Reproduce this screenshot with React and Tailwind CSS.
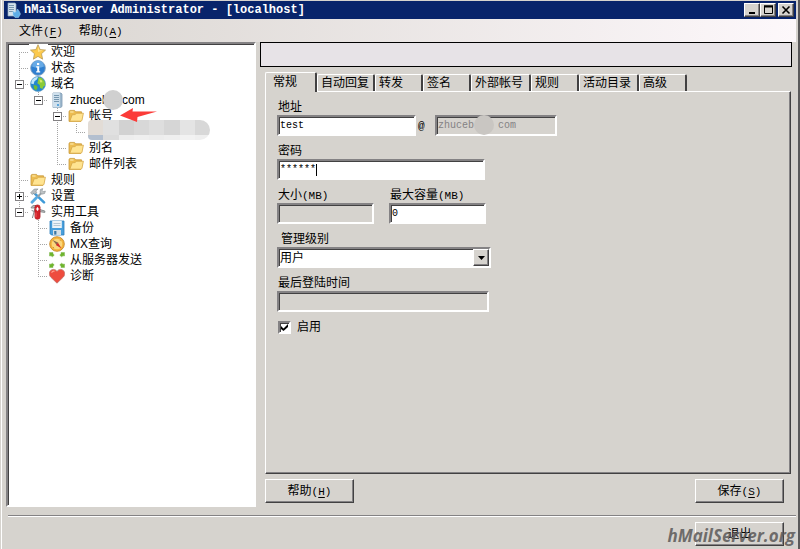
import React from "react";

const SUNKEN =
  "border-2 border-t-[#848284] border-l-[#848284] border-r-white border-b-white shadow-[inset_1px_1px_0_#424142]";
const RAISED =
  "border border-t-white border-l-white border-r-[#424142] border-b-[#424142] shadow-[inset_-1px_-1px_0_#848284]";

function Mono({ children }) {
  return <span className="font-['Liberation_Mono',monospace] text-[11px]">{children}</span>;
}

function Key({ letter }) {
  return (
    <Mono>
      (<u className="underline-offset-2">{letter}</u>)
    </Mono>
  );
}

/* ---------- tree icons ---------- */

function StarIcon() {
  return (
    <svg width="16" height="16" viewBox="0 0 16 16">
      <path d="M8 .7l2.1 4.9 5.4.5-4 3.6 1.1 5.5L8 12.4l-4.6 2.8 1.1-5.5-4-3.6 5.4-.5z" fill="#fcc94b" stroke="#b99a55" strokeWidth=".8" />
      <path d="M8 2.6l1.4 3.6 3.6.4L8 8z" fill="#ffe48f" />
    </svg>
  );
}

function InfoIcon() {
  return (
    <svg width="16" height="16" viewBox="0 0 16 16">
      <circle cx="8" cy="8" r="7.4" fill="#2f7fd0" stroke="#8fa9c4" strokeWidth=".9" />
      <path d="M2 6.5a6 6 0 0 1 12 0Q8 9 2 6.5z" fill="#67aae6" />
      <rect x="7" y="3" width="2.2" height="2" fill="#fff" />
      <path d="M6.2 6.3h3v5h1v1.2H6.2v-1.2h1V7.5h-1z" fill="#fff" />
    </svg>
  );
}

function GlobeIcon() {
  return (
    <svg width="16" height="16" viewBox="0 0 16 16">
      <circle cx="8" cy="8" r="7.5" fill="#2286cf" stroke="#6d9fc4" strokeWidth=".7" />
      <path d="M2 4Q5 .5 8 1.2L6.8 3.5 4.5 5.2 3.6 8.2 1 7.5z" fill="#bfe6fa" />
      <path d="M8.6 1.2l3 .8 3 3.500.5 4-1.600 1-1 2.600-2.500-1.400-.2-2.800-2.500-1.600.8-2.800z" fill="#8ccb38" />
      <path d="M3.6 9l3.2.8.8 2-1.4 2.6-2.2-1.6z" fill="#6ebc32" />
      <path d="M9.4 3.2l2.4 1 .7 2-2.3.2z" fill="#d6e96a" />
    </svg>
  );
}

function ServerIcon() {
  return (
    <svg width="16" height="16" viewBox="0 0 16 16">
      <path d="M4 1h8l1 1v12.5l-1.4 1H4z" fill="#9db8cd" stroke="#7f9bb2" strokeWidth=".8" />
      <path d="M4 1h6.8v14.4H4z" fill="#cfe0ed" />
      <path d="M5 3.5h5M5 5.5h5M5 7.5h5M5 9.5h5" stroke="#7797b0" />
      <rect x="8" y="12" width="2" height="2" fill="#5ba6dd" />
    </svg>
  );
}

function FolderIcon() {
  return (
    <svg width="16" height="16" viewBox="0 0 16 16">
      <path d="M1 13V3.2L2 2.4h4.5l1.2 1.4h5.8V6h.6L13 13.4H1z" fill="#edbd50" stroke="#c99b3c" strokeWidth=".8" />
      <path d="M4.2 6.8l3-.2L8.4 5.2h7L14 12.2l-1 1H1.8z" fill="#ffe491" stroke="#d5a748" strokeWidth=".8" />
      <path d="M2.2 4h3.4" stroke="#fff0b7" />
    </svg>
  );
}

function ToolsIcon() {
  return (
    <svg width="16" height="16" viewBox="0 0 16 16">
      <path d="M3.8 4.6L14 14.4" stroke="#3e9ad8" strokeWidth="2.5" strokeLinecap="round" />
      <path d="M12.5 4L6.8 9.5" stroke="#9aa1a6" strokeWidth="2" />
      <path d="M6.6 9.6L2 14.3" stroke="#55aae2" strokeWidth="2.8" strokeLinecap="round" />
      <path d="M.6 4.8L4.3 1h3.8L5.8 3l1 1.5-2 1.8-1.2-1-1.3 1.3z" fill="#b9bec1" stroke="#858b8f" strokeWidth=".6" />
      <path d="M10 4.5l.4-3L12.7.6l-.5 2.1 1 1 2.2-.6-.8 2.4-2.7.7z" fill="#bec3c6" stroke="#858b8f" strokeWidth=".6" />
    </svg>
  );
}

function KnifeIcon() {
  return (
    <svg width="16" height="16" viewBox="0 0 16 16">
      <path d="M1 3.8Q2 .8 6 1.5l.4 2.2L2.6 4zM5 4.5L2.4 14M9.6 5.5L14.8 7v1.4L9.6 7.6M1.6 6.4l3 1.2" fill="#c2c4c5" stroke="#85898b" strokeWidth="1" />
      <rect x="4.9" y=".9" width="5.2" height="14.4" rx="2.4" fill="#d3222a" stroke="#a5161d" strokeWidth=".6" />
      <path d="M7.5 3.2v3.6M5.8 5h3.4" stroke="#fff" strokeWidth="1.2" />
      <path d="M6 8.5v4.7" stroke="#f06464" strokeWidth=".8" />
    </svg>
  );
}

function DiskIcon() {
  return (
    <svg width="16" height="16" viewBox="0 0 16 16">
      <path d="M1 1h14v14H2.4L1 13.6z" fill="#489fdc" stroke="#2f7fbb" strokeWidth=".8" />
      <rect x="3.2" y="1" width="9.6" height="7" fill="#eef4f8" />
      <path d="M4.5 3.5h7M4.5 5.5h7" stroke="#afc3d0" strokeWidth=".9" />
      <rect x="4" y="10" width="8" height="5" fill="#d6dfe5" />
      <rect x="5.2" y="11" width="2.2" height="3.6" fill="#3b76a3" />
    </svg>
  );
}

function CompassIcon() {
  return (
    <svg width="16" height="16" viewBox="0 0 16 16">
      <circle cx="8" cy="8" r="7.3" fill="#f5b43d" stroke="#c78a2d" strokeWidth=".9" />
      <circle cx="8" cy="8" r="5.3" fill="#fbd77c" />
      <path d="M3.6 4l5.8 2.8-2 2z" fill="#8a6a4c" />
      <path d="M12.6 12.4L6.8 9l2.2-2.2z" fill="#d22c2c" />
      <path d="M12 3.8l-1 1M4 12l1-1" stroke="#c99640" />
    </svg>
  );
}

function ArrowsIcon() {
  return (
    <svg width="16" height="16" viewBox="0 0 16 16">
      <g fill="#6fb52c" stroke="#7fb751" strokeWidth=".5">
        <path d="M.5.5H4v1.200l1.200 1.500-1.800 1.600L2 3.800.5 4z" />
        <path d="M15.500.5H12v1.200l-1.200 1.500 1.800 1.600L14 3.800l1.500.2z" />
        <path d="M.5 15.500H4v-1.200l1.200-1.500-1.800-1.600L2 12.200.5 12z" />
        <path d="M15.500 15.500H12v-1.200l-1.200-1.500 1.800-1.600L14 12.200l1.500-.2z" />
      </g>
    </svg>
  );
}

function HeartIcon() {
  return (
    <svg width="16" height="16" viewBox="0 0 16 16">
      <path d="M8 15.200L1.600 9C-1 6 .6 1.500 4.200 1.400 6.200 1.300 7.400 2.400 8 3.400c.6-1 1.800-2.100 3.800-2 3.600.1 5.200 4.600 2.600 7.600z" fill="#ee4c3e" stroke="#b9706a" strokeWidth=".7" />
      <path d="M2.600 4.800Q3.400 2.800 5.600 3.200" stroke="#ff9c8c" strokeWidth="1.100" fill="none" />
    </svg>
  );
}

/* ---------- tree ---------- */

// A guide cell names the sides that its dotted line reaches: u(p), d(own), r(ight); + and - add a box.
function Guide({ kind }) {
  const has = (c) => kind.includes(c);
  const box = has("+") || has("-");
  return (
    <svg width="19" height="16" viewBox="0 0 19 16" className="shrink-0">
      <g stroke="#a5a5a5" strokeDasharray="1 1">
        {has("u") && <path d="M9.5 0v8" />}
        {has("d") && <path d="M9.5 8v8" />}
        {has("r") && <path d="M9 8.5h10" />}
      </g>
      {box && <rect x="5.5" y="4.5" width="8" height="8" fill="#fff" stroke="#848284" />}
      {box && <path d="M7 8.5h5" stroke="#000" />}
      {has("+") && <path d="M9.5 6v5" stroke="#000" />}
    </svg>
  );
}

const ROWS = [
  { guides: ["dr"], icon: StarIcon, text: "欢迎" },
  { guides: ["udr"], icon: InfoIcon, text: "状态" },
  { guides: ["udr-"], icon: GlobeIcon, text: "域名" },
  { guides: ["ud", "ur-"], icon: ServerIcon, text: "domain" },
  { guides: ["ud", "", "udr-"], icon: FolderIcon, text: "帐号", arrow: true },
  { guides: ["ud", "", "ud", "ur"], text: "" },
  { guides: ["ud", "", "udr"], icon: FolderIcon, text: "别名" },
  { guides: ["ud", "", "ur"], icon: FolderIcon, text: "邮件列表" },
  { guides: ["udr"], icon: FolderIcon, text: "规则" },
  { guides: ["udr+"], icon: ToolsIcon, text: "设置" },
  { guides: ["ur-"], icon: KnifeIcon, text: "实用工具" },
  { guides: ["", "udr"], icon: DiskIcon, text: "备份" },
  { guides: ["", "udr"], icon: CompassIcon, text: "MX查询" },
  { guides: ["", "udr"], icon: ArrowsIcon, text: "从服务器发送" },
  { guides: ["", "ur"], icon: HeartIcon, text: "诊断" },
];

function Blob() {
  return (
    <span className="absolute -top-[4px] left-0 grid h-[20px] w-[122px] grid-cols-8 grid-rows-[15px_5px] overflow-hidden rounded-l-[4px] rounded-r-[10px]">
      <i className="bg-[#e2dcd6]" /><i className="bg-[#e0e0e0]" /><i className="bg-[#d2d2d2]" /><i className="bg-[#d8d8d8]" />
      <i className="bg-[#dedede]" /><i className="bg-[#d6d6d6]" /><i className="bg-[#e4e4e4]" /><i className="bg-[#d8d8d8]" />
      <i className="bg-[#b3bfcf]" /><i className="bg-[#dcdcdc]" /><i className="bg-[#ededed]" /><i className="bg-[#efefef]" />
      <i className="bg-[#ededed]" /><i className="bg-[#efefef]" /><i className="bg-[#f2f2f2]" /><i className="bg-[#efefef]" />
    </span>
  );
}

function TreeRow({ guides, icon: Icon, text, arrow }) {
  return (
    <li className="flex h-4 items-center">
      {guides.map((g, i) => (
        <Guide key={i} kind={g} />
      ))}
      {Icon ? (
        <span className="mr-[3px] flex w-[19px] shrink-0 bg-white pl-px">
          <Icon />
        </span>
      ) : (
        <span className="relative ml-[2px] h-4 w-[122px]">
          <Blob />
        </span>
      )}
      {text === "domain" ? (
        <span className="relative whitespace-pre">
          zhuceb{"    "}com
          <i className="absolute -top-[2px] left-[33px] size-[20px] rounded-full bg-[#d0d0d0]" />
        </span>
      ) : (
        <span>{text}</span>
      )}
      {arrow && (
        <svg width="38" height="16" viewBox="0 0 38 16" className="relative z-20 ml-[7px]">
          <path d="M0 7.500L13 0l-.5 3.500L37 3.500 17.500 9 17 14z" fill="#fb3b38" />
        </svg>
      )}
    </li>
  );
}

/* ---------- form ---------- */

function Field({ id, label, unit, value, className, readOnly, children }) {
  return (
    <div className="relative">
      <label htmlFor={id} className="block h-4 pl-px leading-4">
        {label}
        {unit && <Mono>{unit}</Mono>}
      </label>
      <input
        id={id}
        type="text"
        defaultValue={value}
        readOnly={readOnly}
        className={`${SUNKEN} ${className} block h-[21px] px-px font-['Liberation_Mono',monospace] text-[10px] outline-none`}
      />
      {children}
    </div>
  );
}

const TABS = [
  ["自动回复", "w-[58px]"],
  ["转发", "w-[48px]"],
  ["签名", "w-[48px]"],
  ["外部帐号", "w-[60px]"],
  ["规则", "w-[48px]"],
  ["活动目录", "w-[60px]"],
  ["高级", "w-[48px]"],
];

const TAB =
  "shrink-0 whitespace-nowrap rounded-t-[2px] border-t border-l border-r-2 border-t-white border-l-white border-r-[#424142] text-left";

function PushButton({ children }) {
  return (
    <button type="button" className={`${RAISED} h-6 w-[89px] shrink-0 bg-[#d6d3ce]`}>
      {children}
    </button>
  );
}

function CaptionButton({ label, children }) {
  return (
    <button type="button" aria-label={label} className={`${RAISED} flex h-[14px] w-4 items-center justify-center bg-[#d6d3ce]`}>
      <svg width="12" height="10" viewBox="0 0 12 10" fill="none" stroke="#000">
        {children}
      </svg>
    </button>
  );
}

export default function App() {
  return (
    <div className="flex min-h-screen flex-col border-r-2 border-r-[#5a595a] bg-[#d6d3ce] pr-[2px] pl-[4px] font-['Liberation_Sans','Noto_Sans_CJK_SC',sans-serif] text-[12px] leading-4 text-black shadow-[inset_1px_0_0_#d6d3ce,inset_2px_0_0_#fff]">
      <header className="mt-px flex h-[18px] items-center bg-[#08246b] pr-[2px] pl-[3px]">
        <svg width="14" height="16" viewBox="0 0 14 16">
          <path d="M1 1h7l1 1v11l-1 1H1z" fill="#d5e3ee" stroke="#8ca6bc" strokeWidth=".7" />
          <path d="M2 3.5h5M2 5.5h5M2 7.5h5M2 9.5h4" stroke="#7897af" />
          <path d="M6 9l2 1.5L9.5 9l1-2 1.5 2 1.5 3-2 3.5H8L6 13z" fill="#5eaee8" stroke="#a9d8f7" strokeWidth=".5" />
        </svg>
        <h1 className="ml-[3px] flex-1 font-['Liberation_Mono',monospace] text-[12px] font-bold text-white">
          hMailServer Administrator - [localhost]
        </h1>
        <CaptionButton label="最小化">
          <path d="M3 8h6" strokeWidth="2" />
        </CaptionButton>
        <CaptionButton label="最大化">
          <path d="M2.5 1v7.5h8V1M2 1h9" />
          <path d="M2 1.5h9" strokeWidth="2" />
        </CaptionButton>
        <span className="w-[2px]" />
        <CaptionButton label="关闭">
          <path d="M2.5 1.5l7 7M9.5 1.5l-7 7" strokeWidth="1.6" />
        </CaptionButton>
      </header>

      <nav className="flex h-[23px] items-center gap-4 bg-linear-to-r from-[#d9d5d0] to-[#fdf8fb] pt-px pl-[15px]">
        <button type="button">文件<Key letter="F" /></button>
        <button type="button">帮助<Key letter="A" /></button>
      </nav>

      <main className="flex flex-1 gap-[4px] pr-[4px] pl-[2px]">
        <ul className={`${SUNKEN} w-[250px] shrink-0 bg-white pl-[2px]`}>
          {ROWS.map((row, i) => (
            <TreeRow key={i} {...row} />
          ))}
        </ul>

        <section className="flex min-w-0 flex-1 flex-col">
          <div className="h-[25px] border border-black bg-[#e7e3e7]" />
          <div className="mt-[5px] flex flex-1 flex-col pr-px pl-[5px]">
            <div role="tablist" className="flex items-end">
              <button type="button" role="tab" aria-selected="true" className={`${TAB} relative z-10 -mb-px h-5 w-[52px] bg-[#d6d3ce] pb-[2px] pl-[7px]`}>
                常规
              </button>
              {TABS.map(([name, width]) => (
                <button key={name} type="button" role="tab" aria-selected="false" className={`${TAB} ${width} h-[17px] pl-[3px]`}>
                  {name}
                </button>
              ))}
            </div>

            <form className={`${RAISED} flex flex-1 flex-col gap-[7px] pt-[7px] pl-[11px]`}>
              <div className="flex items-end">
                <Field id="address" label="地址" value="test" className="w-[139px] bg-white" />
                <span className="w-[19px] pl-[2px] leading-5"><Mono>@</Mono></span>
                <div className="relative">
                  <input
                    aria-label="域名"
                    disabled
                    defaultValue="zhuceb    com"
                    className={`${SUNKEN} block h-[21px] w-[122px] px-px font-['Liberation_Mono',monospace] text-[10px] text-[#848284]`}
                  />
                  <i className="absolute top-0 left-[39px] size-[20px] rounded-full bg-[#c9c6c2]" />
                </div>
              </div>
              <Field id="password" label="密码" value="******" className="w-[208px] bg-white">
                <i className="absolute bottom-[4px] left-[39px] h-[12px] w-px bg-black" />
              </Field>
              <div className="flex gap-[15px]">
                <Field id="size" label="大小" unit="(MB)" value="" readOnly className="w-[97px]" />
                <Field id="max" label="最大容量" unit="(MB)" value="0" className="w-[97px] bg-white" />
              </div>
              <div>
                <label htmlFor="level" className="block h-4 pl-[4px]">管理级别</label>
                <div className="relative w-[214px]">
                  <select id="level" className={`${SUNKEN} block h-[21px] w-full appearance-none bg-white px-px outline-none`}>
                    <option>用户</option>
                  </select>
                  <span className={`${RAISED} pointer-events-none absolute top-[2px] right-[2px] flex h-[17px] w-4 items-center justify-center bg-[#d6d3ce]`}>
                    <svg width="7" height="4" viewBox="0 0 7 4"><path d="M0 0h7L3.5 4z" /></svg>
                  </span>
                </div>
              </div>
              <Field id="last" label="最后登陆时间" value="" readOnly className="w-[212px]" />
              <label className="flex h-4 items-center gap-[6px] pl-px">
                <span className="relative flex">
                  <input type="checkbox" defaultChecked className={`${SUNKEN} size-[13px] appearance-none bg-white`} />
                  <svg width="7" height="7" viewBox="0 0 7 7" className="pointer-events-none absolute top-[3px] left-[3px]">
                    <path d="M0 2l2.5 2.5L7 0v3L2.5 7 0 5z" />
                  </svg>
                </span>
                启用
              </label>
            </form>

            <div className="mt-[5px] mb-[4px] flex justify-between pr-[7px]">
              <PushButton>帮助<Key letter="H" /></PushButton>
              <PushButton>保存<Key letter="S" /></PushButton>
            </div>
          </div>
        </section>
      </main>

      <footer className="relative mt-[8px] ml-[4px] border-t border-t-[#848284]">
        <div className="flex justify-end border-t border-white pt-[5px] pr-[12px] pb-[3px]">
          <PushButton>退出</PushButton>
        </div>
        <span className="pointer-events-none absolute right-px bottom-[3px] font-['Open_Sans',sans-serif] text-[17px] leading-5 font-bold text-[#5a5858]/85 italic">
          hMailServer.org
        </span>
      </footer>
    </div>
  );
}
